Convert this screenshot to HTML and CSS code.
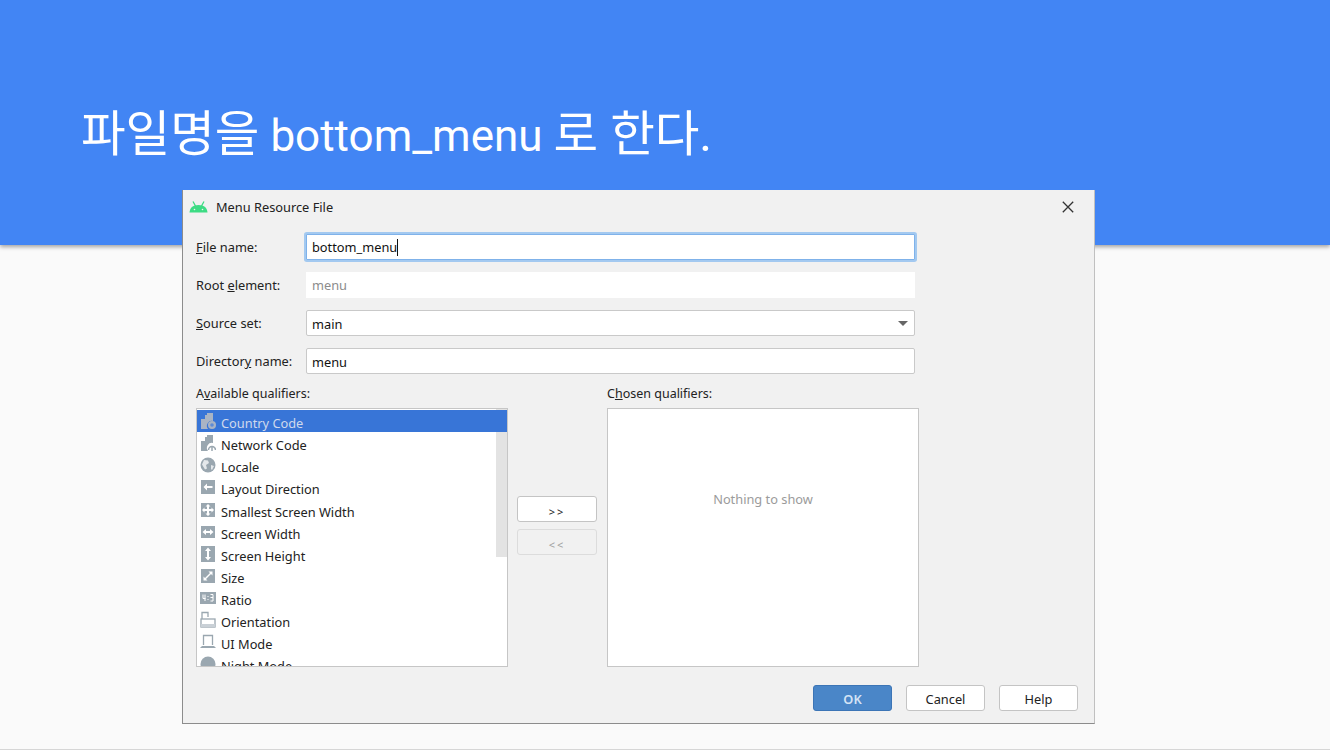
FILE: index.html
```html
<!DOCTYPE html>
<html>
<head>
    <title>bottom_menu</title>
    <link rel="stylesheet" href="styles.css">
</head>
<body>
    <header class="slide-head">
        <h1><span class="ko">파일명을</span> bottom_menu <span class="ko">로 한다.</span></h1>
    </header>
    <div class="slide-foot"></div>

    <div class="dialog">
        <div class="title-bar">
            <svg class="droid" width="19" height="14" viewBox="0 0 19 14">
                <path d="M.5 12.500c.3-4.500 3-7.500 9-7.500s8.700 3 9 7.500z" fill="#3ddc84"/>
                <path d="M4 1.500l2.500 4.500M15 1.500L12.500 6" stroke="#3ddc84" stroke-width="1.300"/>
                <circle cx="5.500" cy="9.500" r=".8" fill="#f1f1f1"/>
                <circle cx="13.500" cy="9.500" r=".8" fill="#f1f1f1"/>
            </svg>
            <span class="title">Menu Resource File</span>
            <svg class="close" width="12" height="12" viewBox="0 0 12 12">
                <path d="M.8.800l10.400 10.400M11.200.800L.8 11.200" stroke="#333" stroke-width="1.300"/>
            </svg>
        </div>

        <div class="fields">
            <label><u>F</u>ile name:</label>
            <div class="input focused">bottom_menu<span class="caret"></span></div>
            <label>Root <u>e</u>lement:</label>
            <div class="input disabled">menu</div>
            <label><u>S</u>ource set:</label>
            <div class="input combo">main<span class="arrow"></span></div>
            <label>Director<u>y</u> name:</label>
            <div class="input">menu</div>
        </div>

        <div class="qualifiers">
            <div class="col">
                <div class="col-label">A<u>v</u>ailable qualifiers:</div>
                <div class="list">
                    <div class="scroll"></div>
                    <div class="row selected">
                        <svg width="16" height="18" viewBox="0 0 16 18"><path d="M1 7h4V3h2V1h6v8a5 5 0 0 0-5 8H1z" fill="#a9b4c4"/><circle cx="12" cy="13" r="4" fill="#a9b4c4"/><circle cx="12" cy="13" r="1.800" fill="#5d8bd6"/></svg>
                        Country Code
                    </div>
                    <div class="row">
                        <svg width="16" height="18" viewBox="0 0 16 18"><path d="M1 7h4V3h2V1h6v8a5 5 0 0 0-5 8H1z" fill="#9aa7b0"/><path d="M8.500 16a3.500 3.500 0 1 1 7 0" fill="none" stroke="#9aa7b0" stroke-width="1.500"/><path d="M12 12v5" stroke="#9aa7b0" stroke-width="1.500"/></svg>
                        Network Code
                    </div>
                    <div class="row">
                        <svg width="16" height="16" viewBox="0 0 16 16"><circle cx="8" cy="8" r="7.500" fill="#9aa7b0"/><path d="M4 3l4 .5 1 2.500-3 2 1 3.500-2 1-3-5zM11 8l3 1-2 4-1-1z" fill="#e4e8eb"/></svg>
                        Locale
                    </div>
                    <div class="row">
                        <svg width="16" height="16" viewBox="0 0 16 16"><rect x="1" y="1" width="14" height="14" fill="#9aa7b0"/><path d="M3.500 8L7 4.500V7h5.500v2H7v2.500z" fill="#fff"/></svg>
                        Layout Direction
                    </div>
                    <div class="row">
                        <svg width="16" height="16" viewBox="0 0 16 16"><rect x="1" y="1" width="14" height="14" fill="#9aa7b0"/><path d="M8 2l2.500 2.500H9V7h2.500V5.500L14 8l-2.500 2.500V9H9v2.500h1.500L8 14l-2.500-2.500H7V9H4.500v1.500L2 8l2.500-2.500V7H7V4.500H5.500z" fill="#fff"/></svg>
                        Smallest Screen Width
                    </div>
                    <div class="row">
                        <svg width="16" height="16" viewBox="0 0 16 16"><rect x="1" y="2" width="14" height="12" fill="#9aa7b0"/><path d="M2.500 8L6 5v2h4V5l3.500 3-3.500 3V9H6v2z" fill="#fff"/></svg>
                        Screen Width
                    </div>
                    <div class="row">
                        <svg width="16" height="16" viewBox="0 0 16 16"><rect x="1" y="0" width="14" height="16" fill="#9aa7b0"/><path d="M8 1.500L11 5H9v6h2l-3 3.500L5 11h2V5H5z" fill="#fff"/></svg>
                        Screen Height
                    </div>
                    <div class="row">
                        <svg width="16" height="16" viewBox="0 0 16 16"><rect x="1" y="1" width="14" height="14" fill="#9aa7b0"/><path d="M3.500 12.500V8.500l1.500 1.500L10 5 8.500 3.500h4v4L11 6l-5 5 1.500 1.500z" fill="#fff"/></svg>
                        Size
                    </div>
                    <div class="row">
                        <svg width="16" height="14" viewBox="0 0 16 14"><rect x="0" y="1" width="16" height="12" fill="#9aa7b0"/><path d="M3 3.500v4h2.500M5 3.500V10M8 5v1M8 8v1M10.500 3.500h2.500V10h-2.500M10.500 6.500H13" fill="none" stroke="#fff"/></svg>
                        Ratio
                    </div>
                    <div class="row">
                        <svg width="16" height="18" viewBox="0 0 16 18"><path d="M2 8V1.500h6V6" fill="none" stroke="#9aa7b0" stroke-width="1.300"/><rect x="1" y="8" width="14" height="8" fill="none" stroke="#9aa7b0" stroke-width="1.300"/><rect x="1" y="13" width="14" height="3" fill="#c9d0d6"/></svg>
                        Orientation
                    </div>
                    <div class="row">
                        <svg width="16" height="16" viewBox="0 0 16 16"><path d="M3.500 11V1.500h9V11" fill="none" stroke="#9aa7b0" stroke-width="1.300"/><path d="M0 14l2-2h12l2 2z" fill="#9aa7b0"/></svg>
                        UI Mode
                    </div>
                    <div class="row">
                        <svg width="16" height="16" viewBox="0 0 16 16"><circle cx="8" cy="8" r="7.500" fill="#9aa7b0"/></svg>
                        Night Mode
                    </div>
                </div>
            </div>

            <div class="shuttle">
                <button class="btn">&gt;&gt;</button>
                <button class="btn off">&lt;&lt;</button>
            </div>

            <div class="col">
                <div class="col-label">C<u>h</u>osen qualifiers:</div>
                <div class="list empty">Nothing to show</div>
            </div>
        </div>

        <div class="actions">
            <button class="btn primary">OK</button>
            <button class="btn">Cancel</button>
            <button class="btn">Help</button>
        </div>
    </div>
</body>
</html>
```

FILE: styles.css
```css
* {
    box-sizing: border-box;
}

html,
body {
    height: 100%;
}

body {
    margin: 0;
    overflow: hidden;
    background-color: #fafafa;
    font-family: "Noto Sans", "Noto Sans CJK KR", sans-serif;
    display: flex;
    flex-direction: column;
}

.slide-head {
    height: 245px;
    padding: 105px 0 0 81px;
    background-color: #4285f4;
    box-shadow: 0 2px 4px rgba(0, 0, 0, 0.35);
}

h1 {
    margin: 0;
    color: #fff;
    font-family: Roboto, "Noto Sans CJK KR", sans-serif;
    font-size: 44px;
    font-weight: 400;
    line-height: 60px;
}

.ko {
    font-size: 48.5px;
}

.slide-foot {
    margin-top: auto;
    height: 1px;
    background-color: #d6d6d6;
}

/* dialog floats over the slide */
.dialog {
    position: absolute;
    left: 182px;
    top: 190px;
    width: 913px;
    height: 534px;
    padding: 0 16px 0 13px;
    background-color: #f1f1f1;
    border-left: 1px solid #8c8c8c;
    border-right: 1px solid #c0c0c0;
    border-bottom: 1px solid #8c8c8c;
    color: #222;
    font-size: 12.8px;
    line-height: 18px;
}

.title-bar {
    height: 44px;
    margin-left: -7px;
    display: flex;
    align-items: center;
    gap: 8px;
    padding-bottom: 10px;
}

.title {
    flex: 1;
}

.close {
    margin-right: 4px;
}

.fields {
    display: grid;
    grid-template-columns: 110px 609px;
    grid-auto-rows: 26px;
    row-gap: 12px;
    align-items: center;
}

label {
    color: #222;
}

.input {
    position: relative;
    height: 26px;
    padding: 0 5px;
    background-color: #fff;
    border: 1px solid #c9c9c9;
    border-radius: 2px;
    line-height: 26px;
    color: #111;
}

.input.focused {
    border: 1px solid #7fb2ea;
    box-shadow: 0 0 0 2px #a3c9f0;
    border-radius: 1px;
    line-height: 24px;
}

.caret {
    display: inline-block;
    width: 1px;
    height: 17px;
    margin-bottom: -4px;
    background-color: #111;
}

.input.disabled {
    border-color: #fff;
    color: #8c8c8c;
    border-radius: 0;
    line-height: 25px;
}

.arrow {
    position: absolute;
    right: 6px;
    top: 10px;
    border-left: 5px solid transparent;
    border-right: 5px solid transparent;
    border-top: 5px solid #666;
}

.qualifiers {
    margin-top: 11px;
    display: flex;
}

.col-label {
    height: 23px;
    font-size: 12.5px;
}

.list {
    position: relative;
    width: 312px;
    height: 259px;
    padding-top: 1px;
    overflow: hidden;
    background-color: #fff;
    border: 1px solid #c6c6c6;
    font-size: 12.8px;
}

.list.empty {
    padding-top: 81px;
    text-align: center;
    color: #9b9b9b;
}

.scroll {
    position: absolute;
    top: 0;
    right: 0;
    width: 11px;
    height: 148px;
    background-color: rgba(0, 0, 0, 0.11);
}

.row {
    height: 22.14px;
    padding-left: 24px;
    position: relative;
    line-height: 27px;
    white-space: nowrap;
}

.row svg {
    position: absolute;
    left: 3px;
    top: 50%;
    transform: translateY(-50%);
}

.row.selected {
    background-color: #3875d7;
    color: #cfd9ec;
}

.shuttle {
    width: 99px;
    padding: 111px 0 0 9px;
    display: flex;
    flex-direction: column;
    gap: 7px;
}

.btn {
    width: 79px;
    height: 26px;
    padding: 2px 0 0;
    background-color: #fff;
    border: 1px solid #c4c4c4;
    border-radius: 3px;
    color: #222;
    font-family: inherit;
    font-size: 12.8px;
    line-height: 22px;
}

.shuttle .btn {
    width: 80px;
    padding-top: 4px;
    letter-spacing: 2px;
    font-size: 11px;
}

.btn.off {
    background-color: #f1f1f1;
    border-color: #dcdcdc;
    color: #a0a0a0;
}

.btn.primary {
    background-color: #4a86c8;
    border-color: #3c75b6;
    color: #d4e3f5;
    font-weight: 600;
}

.actions {
    margin-top: 18px;
    display: flex;
    justify-content: flex-end;
    gap: 14px;
}
```
